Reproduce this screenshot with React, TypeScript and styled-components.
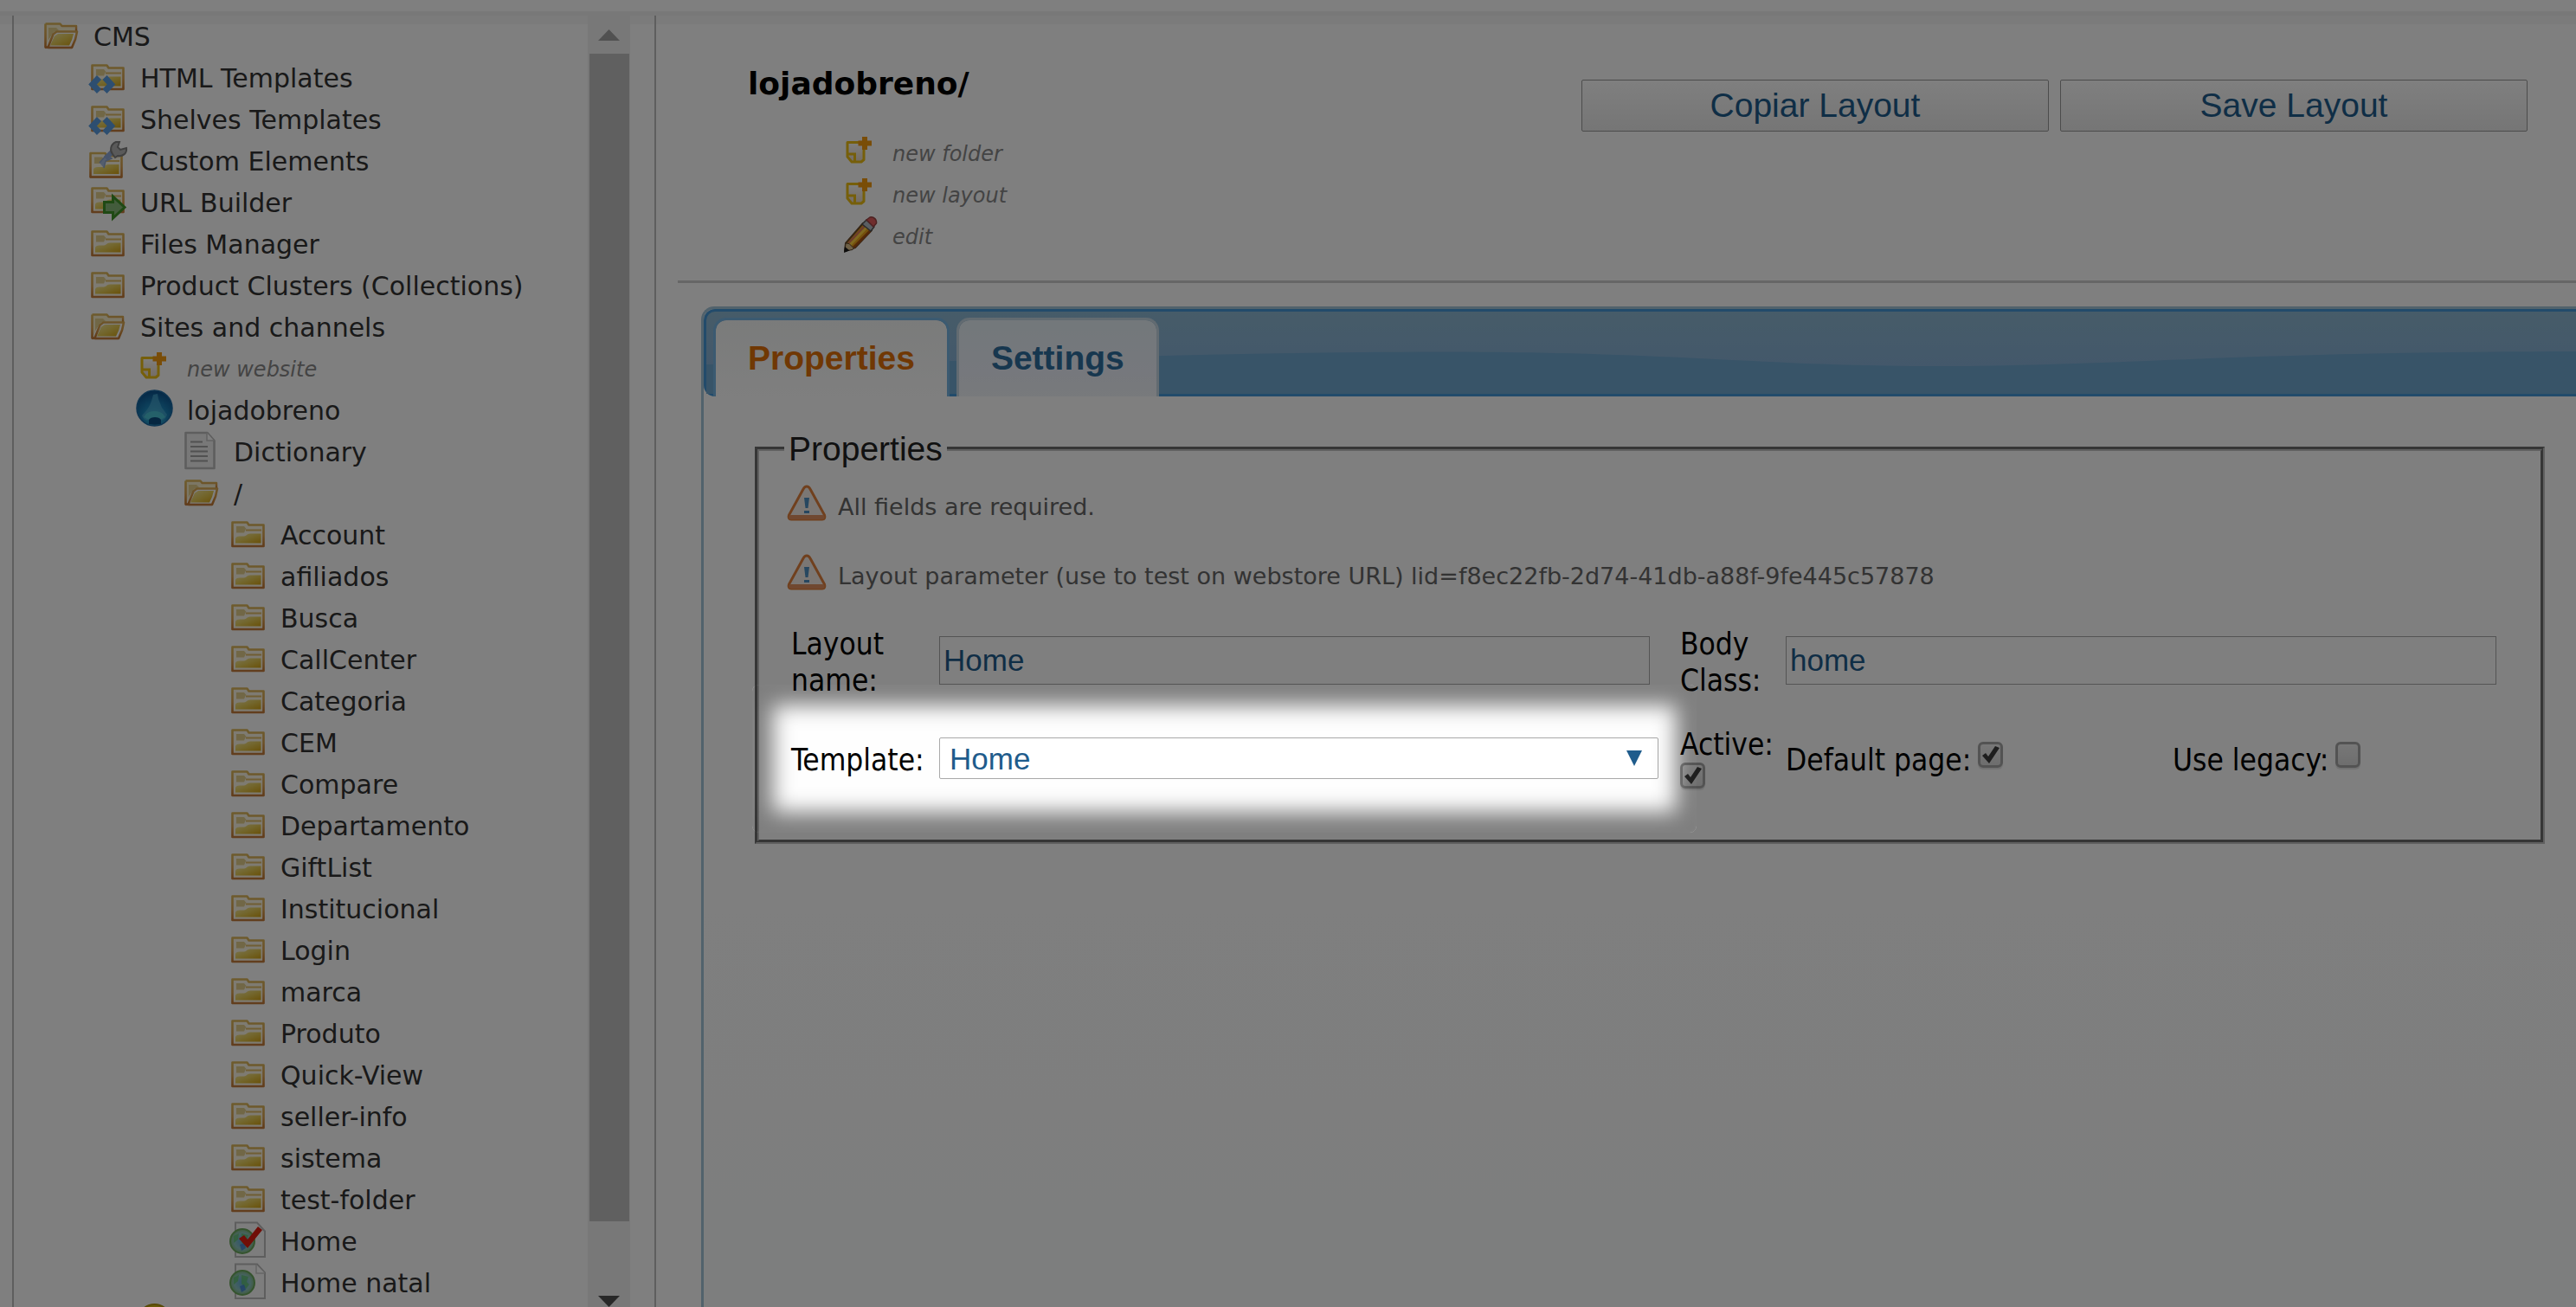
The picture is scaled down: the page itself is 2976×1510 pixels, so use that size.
import React, { ReactNode, useState } from 'react';
import styled, { createGlobalStyle } from 'styled-components';

const verdana = `Verdana, "DejaVu Sans", sans-serif`;
const tahoma = `Tahoma, "DejaVu Sans Condensed", sans-serif`;
const arial = `Arial, "Liberation Sans", sans-serif`;
const link = '#1f5c8c';

const GlobalStyle = createGlobalStyle`
  *, *::before, *::after { box-sizing: border-box; }
  body { margin: 0; background: #fff; font-family: ${verdana}; }
  ul { list-style: none; margin: 0; padding: 0; }
`;

/* ---------- shell ---------- */

const Shell = styled.div`
  display: flex;
  flex-direction: column;
  height: 100vh;
  overflow: hidden;
`;

const TopBar = styled.header`
  flex: none;
  height: 18px;
  border-bottom: 5px solid #f0f0f0;
`;

const Body = styled.div`
  flex: 1;
  min-height: 0;
  display: flex;
  padding-left: 14px;
  background: linear-gradient(#f7f7f7 10px, #fff 10px);
`;

const Sidebar = styled.aside`
  flex: none;
  display: flex;
  width: 744px;
  padding-right: 28px;
  border: solid #bdbdbd;
  border-width: 0 2px;
`;

const Tree = styled.nav`
  flex: 1;
  min-width: 0;
  padding-top: 1px;
  overflow: hidden;
`;

const Row = styled.li<{ $indent: number }>`
  display: flex;
  align-items: flex-start;
  height: 48px;
  padding-left: ${(p) => p.$indent}px;
`;

const RowLink = styled.a<{ $action?: boolean }>`
  display: flex;
  gap: 16px;
  color: ${(p) => (p.$action ? '#888' : '#333')};
  font-size: ${(p) => (p.$action ? 24 : 30)}px;
  font-style: ${(p) => (p.$action ? 'italic' : 'normal')};
  line-height: 48px;
  white-space: nowrap;
  text-decoration: none;
`;

const IconBox = styled.svg`
  flex: none;
  width: 43px;
  height: 43px;
  overflow: visible;
`;

const GradientDefs = styled.svg`
  display: block;
`;

/* ---------- scrollbar ---------- */

const Scrollbar = styled.div`
  flex: none;
  display: flex;
  flex-direction: column;
  width: 49px;
  background: #f1f1f1;
`;

const ScrollButton = styled.button<{ $height: number; $align: string }>`
  display: flex;
  align-items: ${(p) => p.$align};
  justify-content: center;
  height: ${(p) => p.$height}px;
  padding: 0;
  border: 0;
  background: none;
`;

const ScrollThumb = styled.div`
  flex: 1;
  margin: 0 1px 71px 2px;
  background: #c1c1c1;
`;

/* ---------- main ---------- */

const Main = styled.main`
  flex: 1;
  min-width: 0;
  display: flex;
  flex-direction: column;
  padding-left: 25px;
`;

const PageHeader = styled.section`
  display: flex;
  justify-content: space-between;
  align-items: flex-start;
  padding: 58px 56px 26px 0;
  border-bottom: 3px solid #ccc;
`;

const Title = styled.h1`
  margin: 0 0 36px;
  padding-left: 81px;
  color: #000;
  font-size: 36px;
  line-height: 42px;
`;

const ButtonBar = styled.div`
  display: flex;
  gap: 13px;
  padding-top: 16px;
`;

const LayoutButton = styled.button`
  width: 540px;
  height: 60px;
  padding: 0;
  border: 1px solid #999;
  border-radius: 2px;
  background: linear-gradient(#fff, #ebebeb);
  color: ${link};
  font-family: ${arial};
  font-size: 39px;
  line-height: 44px;
`;

const Panel = styled.section`
  flex: 1;
  display: flex;
  flex-direction: column;
  margin: 27px 0 0 27px;
  border: 3px solid #a3c4d8;
  border-width: 3px 0 0 3px;
  border-radius: 15px 0 0 0;
  background: linear-gradient(#fefefe 60%, #fafcfc);
`;

const TabBar = styled.div`
  position: relative;
  display: flex;
  gap: 8px;
  height: 101px;
  padding: 7px 0 0 8px;
  border: 3px solid #4496d6;
  border-right: 0;
  border-radius: 13px 0 0 13px;
  background: linear-gradient(#8db8d2, #87b0d6 70%);
`;

const Wave = styled.svg`
  position: absolute;
  inset: 0;
  width: 100%;
  height: 100%;
`;

const Tab = styled.button<{ $active?: boolean }>`
  position: relative;
  height: 91px;
  padding: 0 37px;
  border: 3px solid ${(p) => (p.$active ? '#76b4e2' : '#c4d6e2')};
  border-bottom: 0;
  border-radius: 15px 15px 0 0;
  background: ${(p) => (p.$active ? 'linear-gradient(#f5f7f6, #fefefe)' : 'linear-gradient(#e6f0f6, #ecf0fa 65%, #f0f4f8)')};
  background-clip: padding-box;
  color: ${(p) => (p.$active ? '#e07008' : '#2e6e9e')};
  font-family: ${arial};
  font-size: 39px;
  font-weight: bold;
  line-height: 88px;
`;

/* ---------- form ---------- */

const Form = styled.form`
  padding: 38px 36px 0 59px;
`;

const Fieldset = styled.fieldset`
  min-width: 0;
  margin: 0;
  padding: 19px 16px 50px 29px;
  border: 5px groove #c0c0c0;
`;

const Legend = styled.legend`
  padding: 0 5px;
  color: #222;
  font-family: ${arial};
  font-size: 39px;
  line-height: 45px;
`;

const Note = styled.p`
  display: flex;
  align-items: flex-end;
  gap: 13px;
  margin: 0 0 38px 3px;
  color: #666;
  font-size: 27px;
  line-height: 32px;
`;

const WarningSvg = styled.svg`
  flex: none;
  width: 46px;
  height: 42px;
`;

const Fields = styled.div`
  display: grid;
  grid-template-columns: 171px minmax(0, 1fr) 122px minmax(0, 1fr);
  grid-auto-rows: 84px;
  align-items: center;
  row-gap: 29px;
  padding: 3px 0 0 8px;
  font-family: ${tahoma};
  font-size: 35px;
  line-height: 42px;
`;

const FieldLabel = styled.label<{ $narrow?: boolean }>`
  position: relative;
  z-index: 1;
  max-width: ${(p) => (p.$narrow ? '110px' : 'none')};
`;

const Control = styled.div<{ $end: number }>`
  position: relative;
  padding: 0 ${(p) => p.$end}px 4px 0;
`;

const TextInput = styled.input`
  display: block;
  width: 100%;
  height: 56px;
  padding: 0 4px;
  border: 1px solid #a9a9a9;
  background: #fff;
  color: ${link};
  font-family: ${arial};
  font-size: 35px;
`;

const Select = styled.select`
  display: block;
  width: 100%;
  height: 48px;
  padding: 0 11px;
  appearance: none;
  border: 1px solid #a9a9a9;
  border-radius: 2px;
  background: #fff;
  color: ${link};
  font-family: ${arial};
  font-size: 35px;
`;

const SelectArrow = styled.svg`
  position: absolute;
  right: 44px;
  top: 15px;
  width: 18px;
  height: 18px;
  pointer-events: none;
`;

const CheckPair = styled.div`
  display: grid;
  grid-template-columns: 1fr 1fr;
  column-gap: 38px;
`;

const CheckLabel = styled.label`
  display: flex;
  flex-wrap: wrap;
  align-items: flex-start;
  column-gap: 8px;
`;

const CheckWrap = styled.span`
  position: relative;
  width: 29px;
  height: 36px;
`;

const CheckInput = styled.input`
  display: block;
  width: 29px;
  height: 30px;
  margin: 0;
  appearance: none;
  border: 3px solid #a6a6a6;
  border-radius: 6px;
  background: linear-gradient(#efefef, #dcdcdc);
  box-shadow: 0 2px 1px #e4e4e4;
`;

const CheckMark = styled.svg`
  position: absolute;
  left: 5px;
  top: 4px;
  width: 20px;
  height: 21px;
  pointer-events: none;
`;

/* Dims the page around the field it wraps, with a soft inner edge. */
const Spotlight = styled.div`
  position: absolute;
  inset: -61px -19px -58px -216px;
  border-radius: 8px;
  box-shadow: 0 0 0 4000px rgba(0, 0, 0, 0.5), inset 0 0 24px 24px rgba(0, 0, 0, 0.5);
  pointer-events: none;
  z-index: 2;
`;

/* ---------- icons ---------- */

type IconName = 'open' | 'closed' | 'code' | 'wrench' | 'url' | 'new' | 'site' | 'doc' | 'page' | 'pageOk' | 'pencil' | 'coin';

const Gradients = () => (
  <GradientDefs width="0" height="0" aria-hidden="true">
    <defs>
      <linearGradient id="edge" x1="0" y1="0" x2="0" y2="1">
        <stop offset="0" stopColor="#dcb75a" />
        <stop offset=".55" stopColor="#d9a04e" />
        <stop offset="1" stopColor="#c1762f" />
      </linearGradient>
      <linearGradient id="gold" x1="0" y1="0" x2="1" y2="1">
        <stop offset="0" stopColor="#f4e8a0" />
        <stop offset=".5" stopColor="#e6cc58" />
        <stop offset="1" stopColor="#d4a414" />
      </linearGradient>
      <radialGradient id="sea" cx=".5" cy=".75" r=".7">
        <stop offset="0" stopColor="#3fc3d8" />
        <stop offset=".5" stopColor="#1a82b8" />
        <stop offset="1" stopColor="#0c5490" />
      </radialGradient>
      <radialGradient id="earth" cx=".5" cy=".5" r=".55">
        <stop offset="0" stopColor="#5ea8dc" />
        <stop offset=".6" stopColor="#8cc4c0" />
        <stop offset="1" stopColor="#7cb46c" />
      </radialGradient>
      <linearGradient id="paper" x1="0" y1="0" x2="0" y2="1">
        <stop offset="0" stopColor="#fff" />
        <stop offset="1" stopColor="#e9d8c4" />
      </linearGradient>
    </defs>
  </GradientDefs>
);

const ClosedFolder = () => (
  <g>
    <path d="M3.5 8.5h17l2 3h17v24.5h-36z" fill="#fcf6e4" stroke="url(#edge)" strokeWidth="2.6" strokeLinejoin="round" />
    <path d="M8 13h9l2.500 3h-0.500l-2 4.500H8z" fill="#e3cf8c" />
    <path d="M19 17.500h18" stroke="#e0bd66" strokeWidth="2" />
    <path d="M7 32.500v-5c0-2 2-3 5-3h5c3 0 3-3 7-3h12.500v11z" fill="url(#gold)" />
    <path d="M3 36h37" stroke="#c47c3c" strokeWidth="2" />
  </g>
);

const OpenFolder = () => (
  <g>
    <path d="M3.500 8.500v27.500l6-13 5-6h23V12H22l-2-3z" fill="#f8eecb" />
    <path d="M3.5 8.500h17l2 2.500h16.500v6" fill="none" stroke="url(#edge)" strokeWidth="2.5" strokeLinejoin="round" />
    <path d="M7 13h9l3 3-6 2-6 9z" fill="#e3cf8c" />
    <path d="M3.500 8.500v27h3l6-15 4-3h23.500l-2 9-4 9.500h-27.500" fill="none" stroke="url(#edge)" strokeWidth="2.6" strokeLinejoin="round" />
    <path d="M9 33.500l5-11 4-2.500h18l-2 7-3 6.500z" fill="url(#gold)" />
    <path d="M3 36h31" stroke="#c47c3c" strokeWidth="2.2" />
  </g>
);

const Page = () => (
  <path d="M7 1.500h25l9 10v29.500H7z" fill="#fbfbfb" stroke="#bdbdbd" strokeWidth="2" />
);

const Earth = () => (
  <g>
    <circle cx="15" cy="23" r="14" fill="url(#earth)" stroke="#6aa85c" strokeWidth="2" />
    <path d="M14 14l8 2-2 6 3 3-4 5-5-6zM5 17l6-3-1 7-5 4z" fill="#62c070" opacity=".8" />
    <path d="M12 27l5-2 2 6-5 3z" fill="#3f7fd0" opacity=".8" />
  </g>
);

const drawings: Record<IconName, ReactNode> = {
  closed: <ClosedFolder />,
  open: <OpenFolder />,
  code: (
    <g>
      <ClosedFolder />
      <g transform="translate(14.5 30.5)" fill="none" stroke="#5a9ce0" strokeWidth="7">
        <path d="M-3-8L-10.500 0l7.500 8M3.500-8L11 0l-7.500 8" />
      </g>
    </g>
  ),
  wrench: (
    <g>
      <g transform="translate(-2 5.5)"><ClosedFolder /></g>
      <path d="M12 25l8-9 6 4-7 3-2 8" fill="#a9bddc" stroke="#8ea6cf" strokeWidth="1.5" />
      <path d="M19 20l9-9" stroke="#8fa8d6" strokeWidth="6" />
      <path d="M27 15c-3-4-3-11 4-14h4l-2 6 3 3 7-2c1 6-4 10-10 9l-3 2z" fill="#b4b4b4" stroke="#808080" strokeWidth="2" />
    </g>
  ),
  url: (
    <g>
      <g transform="translate(0 -2)"><ClosedFolder /></g>
      <path d="M17.500 22.500h10V16l13.500 12.500L27.500 41v-6.500h-10z" fill="#86b878" stroke="#3f9228" strokeWidth="3" />
    </g>
  ),
  new: (
    <g>
      <path d="M7 10.500h19v20l-3 2.500H12l-5-6z" fill="url(#paper)" stroke="#ecbe14" strokeWidth="3" strokeLinejoin="round" />
      <path d="M7 24h8.500v9" fill="none" stroke="#ecbe14" strokeWidth="3" />
      <path d="M27 4v15M19.500 11.500h15.500" stroke="#f29a10" strokeWidth="6" />
    </g>
  ),
  site: (
    <g>
      <circle cx="21.5" cy="20.5" r="20.5" fill="url(#sea)" stroke="#1d6ba4" strokeWidth="1.5" />
      <path d="M20 5l5-1 1 6 4 10 6 8c-1 4-4 6-7 7-3-5-13-5-16 0-3-1-5-3-6-6 6-6 10-11 13-24z" fill="#49a8d0" opacity=".7" />
      <path d="M12 27c5-4 14-4 19 0l3 4-6 3c-3-3-10-3-13 0l-6-3z" fill="#4cc8d4" opacity=".8" />
      <path d="M15 34c2-4 12-4 14 0v5c-5 1-9 1-14 0z" fill="#0b4c80" />
    </g>
  ),
  doc: (
    <g transform="translate(-4 -1)">
      <path d="M7.500 2h25l8 9v32h-33z" fill="#f1f1f1" stroke="#bcbcbc" strokeWidth="2.6" strokeLinejoin="round" />
      <path d="M32 2v9h8" fill="#fff" stroke="#c4c4c4" strokeWidth="1.5" />
      <path d="M13 12.500h14M13 18h20M13 23.500h20M13 29h20M13 34.500h20" stroke="#a2a2a2" strokeWidth="2" />
    </g>
  ),
  page: <g><Page /><path d="M31 2v10h10" fill="#fff" stroke="#ccc" strokeWidth="1.5" /><Earth /></g>,
  pageOk: <g><Page /><Earth /><path d="M11 20l6-4 4 5L33 6l5 4-17 21z" fill="#e01c10" /></g>,
  pencil: (
    <g strokeLinejoin="round">
      <path d="M4 40l1-9L25 8l10 8-19 20z" fill="#e8a018" stroke="#6c4a28" strokeWidth="2" />
      <path d="M8.500 31L28 10" stroke="#d8785c" strokeWidth="2.5" />
      <path d="M10 33L30 12" stroke="#ffd040" strokeWidth="3" />
      <path d="M14 36l19-19" stroke="#a85010" strokeWidth="3" />
      <path d="M4 40l1-9 4 .500 5 5-1 2z" fill="#dcc08c" stroke="#5a4630" />
      <path d="M3 42l1-7 5.500 4.500z" fill="#181818" />
      <path d="M24 9l5-5 9 8-4 5z" fill="#b4bcc4" stroke="#555" strokeWidth="1.500" />
      <path d="M29 4l4-3c5-1 8 3 7.500 7L37 12z" fill="#e05c5c" stroke="#944" strokeWidth="1.500" />
    </g>
  ),
  coin: <circle cx="21.5" cy="19" r="19" fill="#d2b414" stroke="#b0940c" strokeWidth="2" />,
};

const Icon = ({ name }: { name: IconName }) => (
  <IconBox viewBox="0 0 43 43" aria-hidden="true">{drawings[name]}</IconBox>
);

const Warning = () => (
  <WarningSvg viewBox="0 0 46 42" aria-hidden="true">
    <path d="M23 2c2 0 3 1 4 3l16.500 30c1 3 0 5-2.500 5H5c-2.500 0-3.500-2-2.500-5L19 5c1-2 2-3 4-3z" fill="#f7efe9" stroke="#e0803c" strokeWidth="3" />
    <path d="M5 37.500h36" stroke="#e09060" strokeWidth="5" strokeLinecap="round" />
    <path d="M20 15h6l-1.500 12h-3zM20 30h6v3h-6z" fill="#4f8fc0" />
  </WarningSvg>
);

const Arrow = ({ up }: { up?: boolean }) => (
  <svg width="25" height="13" viewBox="0 0 25 13" aria-hidden="true">
    <path d={up ? 'M0 13L12.500 0 25 13z' : 'M0 0h25L12.500 13z'} fill={up ? '#a3a3a3' : '#505050'} />
  </svg>
);

/* ---------- data ---------- */

type TreeNode = { level: number; icon: IconName; text: string; action?: boolean };

const folders = ['Account', 'afiliados', 'Busca', 'CallCenter', 'Categoria', 'CEM', 'Compare', 'Departamento', 'GiftList', 'Institucional', 'Login', 'marca', 'Produto', 'Quick-View', 'seller-info', 'sistema', 'test-folder'];

const nodes: TreeNode[] = [
  { level: 0, icon: 'open', text: 'CMS' },
  { level: 1, icon: 'code', text: 'HTML Templates' },
  { level: 1, icon: 'code', text: 'Shelves Templates' },
  { level: 1, icon: 'wrench', text: 'Custom Elements' },
  { level: 1, icon: 'url', text: 'URL Builder' },
  { level: 1, icon: 'closed', text: 'Files Manager' },
  { level: 1, icon: 'closed', text: 'Product Clusters (Collections)' },
  { level: 1, icon: 'open', text: 'Sites and channels' },
  { level: 2, icon: 'new', text: 'new website', action: true },
  { level: 2, icon: 'site', text: 'lojadobreno' },
  { level: 3, icon: 'doc', text: 'Dictionary' },
  { level: 3, icon: 'open', text: '/' },
  ...folders.map((text): TreeNode => ({ level: 4, icon: 'closed', text })),
  { level: 4, icon: 'pageOk', text: 'Home' },
  { level: 4, icon: 'page', text: 'Home natal' },
  { level: 2, icon: 'coin', text: '' },
];

const actions: { icon: IconName; text: string }[] = [
  { icon: 'new', text: 'new folder' },
  { icon: 'new', text: 'new layout' },
  { icon: 'pencil', text: 'edit' },
];

const Check = ({ label, initial }: { label: string; initial: boolean }) => {
  const [on, setOn] = useState(initial);
  return (
    <CheckLabel>
      {label}
      <CheckWrap>
        <CheckInput type="checkbox" checked={on} onChange={() => setOn(!on)} />
        {on && (
          <CheckMark viewBox="0 0 20 21" aria-hidden="true">
            <path d="M0 12l4-3 3 4L15 1l5 2-12 18z" fill="#3c3c3c" />
          </CheckMark>
        )}
      </CheckWrap>
    </CheckLabel>
  );
};

export default function App() {
  return (
    <Shell>
      <GlobalStyle />
      <TopBar />
      <Body>
        <Sidebar>
          <Tree aria-label="CMS">
            <Gradients />
            <ul>
              {nodes.map((n, i) => (
                <Row key={i} $indent={33 + n.level * 54}>
                  <RowLink href="#" $action={n.action}><Icon name={n.icon} />{n.text}</RowLink>
                </Row>
              ))}
            </ul>
          </Tree>
          <Scrollbar>
            <ScrollButton $height={44} $align="center" aria-label="Scroll up"><Arrow up /></ScrollButton>
            <ScrollThumb />
            <ScrollButton $height={28} $align="flex-end" aria-label="Scroll down"><Arrow /></ScrollButton>
          </Scrollbar>
        </Sidebar>
        <Main>
          <PageHeader>
            <div>
              <Title>lojadobreno/</Title>
              <ul>
                {actions.map((a) => (
                  <Row key={a.text} $indent={189}>
                    <RowLink href="#" $action><Icon name={a.icon} />{a.text}</RowLink>
                  </Row>
                ))}
              </ul>
            </div>
            <ButtonBar>
              <LayoutButton type="button">Copiar Layout</LayoutButton>
              <LayoutButton type="button">Save Layout</LayoutButton>
            </ButtonBar>
          </PageHeader>
          <Panel>
            <TabBar role="tablist">
              <Wave viewBox="0 0 2160 95" preserveAspectRatio="none" aria-hidden="true">
                <path d="M0 61C250 61 500 49 760 47C1100 43 1200 63 1420 63C1640 63 1750 47 2160 46V95H0z" fill="#70a8d0" />
              </Wave>
              <Tab type="button" role="tab" aria-selected="true" $active>Properties</Tab>
              <Tab type="button" role="tab" aria-selected="false">Settings</Tab>
            </TabBar>
            <Form>
              <Fieldset>
                <Legend>Properties</Legend>
                <Note><Warning />All fields are required.</Note>
                <Note><Warning />Layout parameter (use to test on webstore URL) lid=f8ec22fb-2d74-41db-a88f-9fe445c57878</Note>
                <Fields>
                  <FieldLabel htmlFor="name" $narrow>Layout name:</FieldLabel>
                  <Control $end={35}><TextInput id="name" defaultValue="Home" /></Control>
                  <FieldLabel htmlFor="bodyClass" $narrow>Body Class:</FieldLabel>
                  <Control $end={35}><TextInput id="bodyClass" defaultValue="home" /></Control>
                  <FieldLabel htmlFor="template">Template:</FieldLabel>
                  <Control $end={25}>
                    <Select id="template" defaultValue="Home"><option>Home</option></Select>
                    <SelectArrow viewBox="0 0 18 18" aria-hidden="true"><path d="M0 0h18L9 18z" fill={link} /></SelectArrow>
                    <Spotlight />
                  </Control>
                  <Check label="Active:" initial />
                  <CheckPair>
                    <Check label="Default page:" initial />
                    <Check label="Use legacy:" initial={false} />
                  </CheckPair>
                </Fields>
              </Fieldset>
            </Form>
          </Panel>
        </Main>
      </Body>
    </Shell>
  );
}
